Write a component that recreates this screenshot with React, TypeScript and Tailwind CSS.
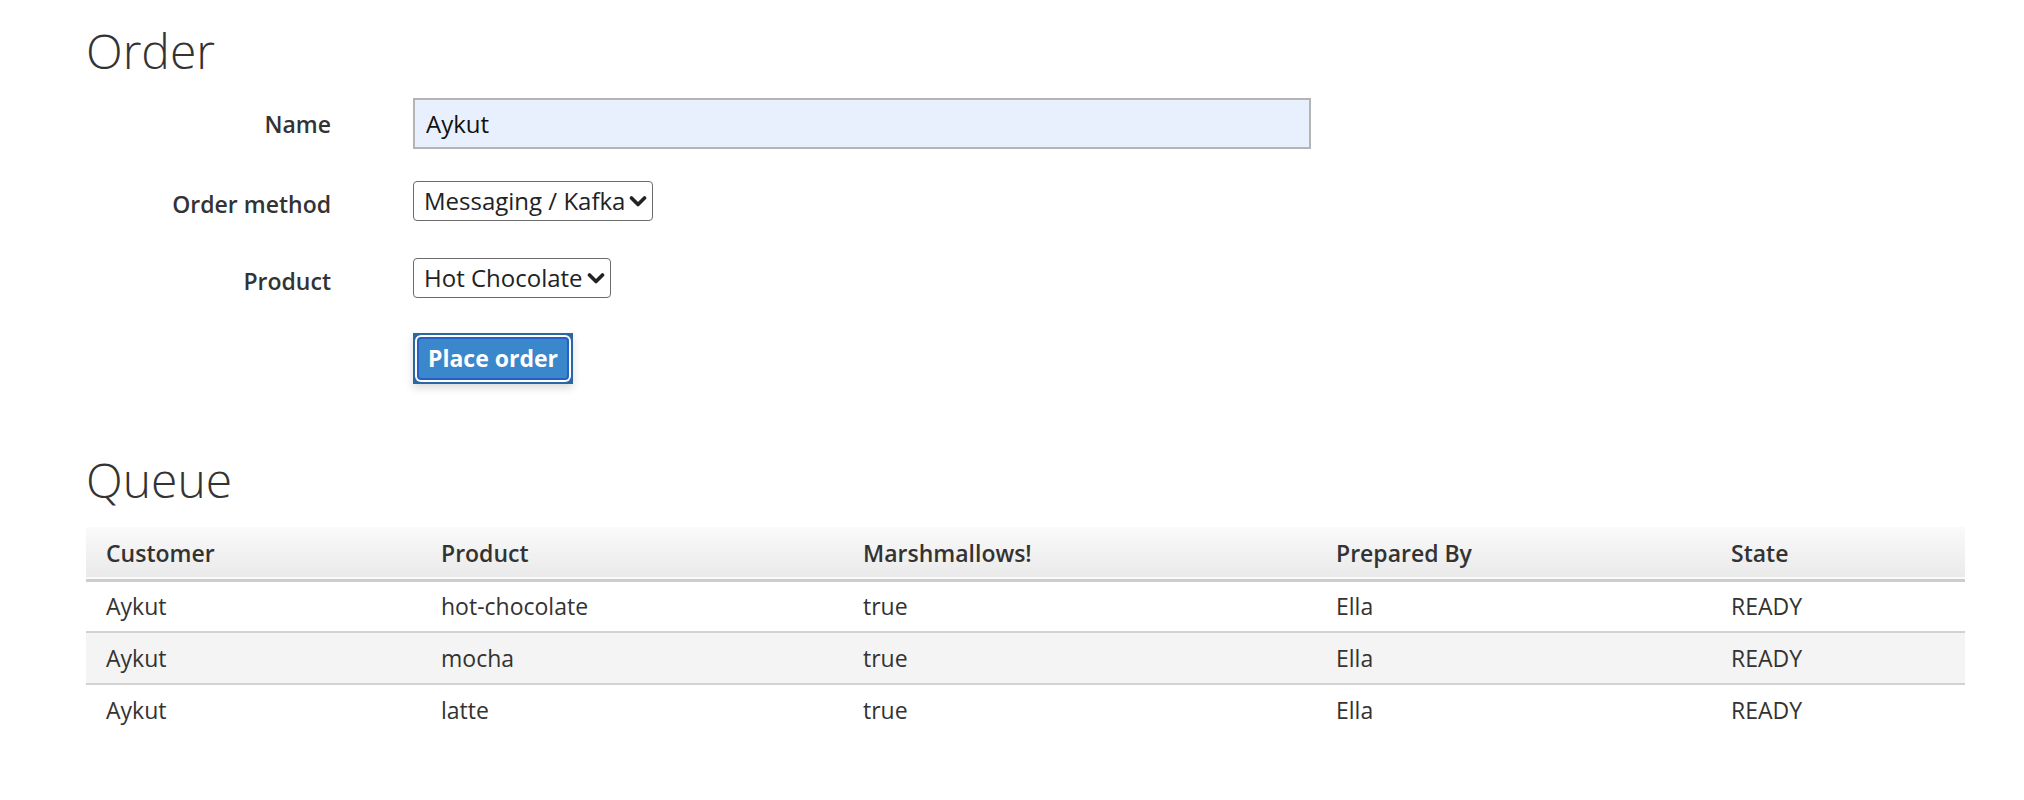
import { useState } from 'react';

const orders = [
  { customer: 'Aykut', product: 'hot-chocolate', marshmallows: 'true', preparedBy: 'Ella', state: 'READY' },
  { customer: 'Aykut', product: 'mocha', marshmallows: 'true', preparedBy: 'Ella', state: 'READY' },
  { customer: 'Aykut', product: 'latte', marshmallows: 'true', preparedBy: 'Ella', state: 'READY' },
];

function Chevron() {
  return (
    <svg className="w-[18px] h-[12px] text-[#222]" viewBox="0 0 18 12" fill="none" stroke="currentColor">
      <path d="M2.5 3l6.5 6.5 6.5-6.5" strokeWidth={3.6} strokeLinecap="round" strokeLinejoin="round" />
    </svg>
  );
}

function FakeSelect({ value }: { value: string }) {
  return (
    <div className="inline-flex items-center h-[40px] pl-[10px] pr-[5px] gap-[4px] border border-[#6b6b6b] rounded-[4px] bg-white text-[24px] text-[#222]">
      <span className="leading-none">{value}</span>
      <Chevron />
    </div>
  );
}

export default function App() {
  const [name, setName] = useState('Aykut');

  return (
    <div className="min-h-[800px] bg-white pl-[86px] pr-[59px] text-[#333]" style={{ fontFamily: '"Open Sans", "Liberation Sans", sans-serif' }}>
      {/* Order form */}
      <h2 className="pt-[21px] text-[48px] leading-[60px] font-light">Order</h2>

      <div className="mt-[17px] grid grid-cols-[245px_898px] gap-x-[82px]">
        <label className="flex items-center justify-end pt-[1px] text-[23px] font-semibold">Name</label>
        <input
          value={name}
          onChange={(e) => setName(e.target.value)}
          className="h-[51px] px-[11px] border-2 border-[#b4b4b4] bg-[#e8f0fe] text-[24px] text-[#111] outline-none"
        />

        <label className="mt-[32px] flex items-center justify-end pt-[6px] text-[23px] font-semibold">Order method</label>
        <div className="mt-[32px]">
          <FakeSelect value="Messaging / Kafka" />
        </div>

        <label className="mt-[36px] flex items-center justify-end pt-[6px] text-[23px] font-semibold">Product</label>
        <div className="mt-[36px]">
          <FakeSelect value="Hot Chocolate" />
        </div>

        <div />
        <div className="mt-[35px]">
          <div className="inline-block bg-[#2a67a3] p-[2px] shadow-[0_4px_8px_rgba(0,0,0,0.15)]">
            <div className="bg-white rounded-[6px] p-[2px]">
              <button className="h-[43px] w-[152px] rounded-[4px] border-2 border-[#2560c8] bg-[#3b87cc] text-[23px] font-bold text-white leading-none">
                Place order
              </button>
            </div>
          </div>
        </div>
      </div>

      {/* Queue */}
      <h2 className="mt-[66px] text-[48px] leading-[60px] font-light">Queue</h2>

      <table className="mt-[17px] w-full table-fixed border-collapse text-[23px]">
        <colgroup>
          <col className="w-[335px]" />
          <col className="w-[422px]" />
          <col className="w-[473px]" />
          <col className="w-[395px]" />
          <col />
        </colgroup>
        <thead>
          <tr className="h-[53px] bg-gradient-to-b from-[#fafafa] to-[#eaeaea] border-b-[3px] border-[#cdcdcd]">
            <th className="pl-[20px] text-left font-semibold align-middle">Customer</th>
            <th className="pl-[20px] text-left font-semibold align-middle">Product</th>
            <th className="pl-[20px] text-left font-semibold align-middle">Marshmallows!</th>
            <th className="pl-[20px] text-left font-semibold align-middle">Prepared By</th>
            <th className="pl-[20px] text-left font-semibold align-middle">State</th>
          </tr>
        </thead>
        <tbody>
          {orders.map((o, i) => (
            <tr key={i} className={`h-[52px] ${i < orders.length - 1 ? 'border-b-2 border-[#d2d2d2]' : ''} ${i % 2 === 1 ? 'bg-[#f4f4f4]' : 'bg-white'}`}>
              <td className="pl-[20px] align-middle">{o.customer}</td>
              <td className="pl-[20px] align-middle">{o.product}</td>
              <td className="pl-[20px] align-middle">{o.marshmallows}</td>
              <td className="pl-[20px] align-middle">{o.preparedBy}</td>
              <td className="pl-[20px] align-middle">{o.state}</td>
            </tr>
          ))}
        </tbody>
      </table>
    </div>
  );
}
